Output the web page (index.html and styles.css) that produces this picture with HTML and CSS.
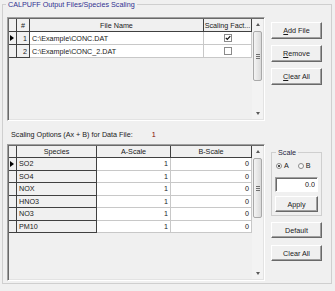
FILE: index.html
```html
<!DOCTYPE html>
<html lang="en">
<head>
  <meta charset="UTF-8" />
  <title>CALPUFF Output Files/Species Scaling</title>
  <link rel="stylesheet" href="styles.css">
</head>
<body>
  <fieldset class="group">
    <legend>CALPUFF Output Files/Species Scaling</legend>

    <div class="row">
      <div class="grid grid-files">
        <div class="cells">
          <div class="gr head">
            <div class="c fx"></div>
            <div class="c fx">#</div>
            <div class="c fx">File Name</div>
            <div class="c fx">Scaling Fact...</div>
          </div>
          <div class="gr">
            <div class="c fx ind"><span class="arrow"></span></div>
            <div class="c fx num">1</div>
            <div class="c">C:\Example\CONC.DAT</div>
            <div class="c chk">
              <svg width="8" height="8" viewBox="0 0 8 8"><rect x="0.5" y="0.5" width="7" height="7" fill="#fff" stroke="#8a8a8a"/><path d="M1.8 3.8 L3.3 5.4 L6.3 2.2" stroke="#111" stroke-width="1.2" fill="none"/></svg>
            </div>
          </div>
          <div class="gr">
            <div class="c fx ind"></div>
            <div class="c fx num">2</div>
            <div class="c">C:\Example\CONC_2.DAT</div>
            <div class="c chk">
              <svg width="8" height="8" viewBox="0 0 8 8"><rect x="0.5" y="0.5" width="7" height="7" fill="#fff" stroke="#8a8a8a"/></svg>
            </div>
          </div>
        </div>
        <div class="vscroll">
          <div class="sb-arrow up"></div>
          <div class="thumb thumb-files"><span class="grip"></span></div>
          <div class="track"></div>
          <div class="sb-arrow down"></div>
        </div>
      </div>

      <div class="buttons">
        <button class="btn"><u>A</u>dd File</button>
        <button class="btn"><u>R</u>emove</button>
        <button class="btn"><u>C</u>lear All</button>
      </div>
    </div>

    <div class="info">Scaling Options (Ax + B) for Data File: <span class="file-no">1</span></div>

    <div class="row">
      <div class="grid grid-species">
        <div class="cells">
          <div class="gr head">
            <div class="c fx"></div>
            <div class="c fx">Species</div>
            <div class="c fx">A-Scale</div>
            <div class="c fx">B-Scale</div>
          </div>
          <div class="gr">
            <div class="c fx ind"><span class="arrow"></span></div>
            <div class="c fx">SO2</div>
            <div class="c num">1</div>
            <div class="c num">0</div>
          </div>
          <div class="gr">
            <div class="c fx ind"></div>
            <div class="c fx">SO4</div>
            <div class="c num">1</div>
            <div class="c num">0</div>
          </div>
          <div class="gr">
            <div class="c fx ind"></div>
            <div class="c fx">NOX</div>
            <div class="c num">1</div>
            <div class="c num">0</div>
          </div>
          <div class="gr">
            <div class="c fx ind"></div>
            <div class="c fx">HNO3</div>
            <div class="c num">1</div>
            <div class="c num">0</div>
          </div>
          <div class="gr">
            <div class="c fx ind"></div>
            <div class="c fx">NO3</div>
            <div class="c num">1</div>
            <div class="c num">0</div>
          </div>
          <div class="gr">
            <div class="c fx ind"></div>
            <div class="c fx">PM10</div>
            <div class="c num">1</div>
            <div class="c num">0</div>
          </div>
        </div>
        <div class="vscroll">
          <div class="sb-arrow up"></div>
          <div class="thumb thumb-species"><span class="grip"></span></div>
          <div class="track"></div>
          <div class="sb-arrow down"></div>
        </div>
      </div>

      <div class="side">
        <fieldset class="scale">
          <legend>Scale</legend>
          <div class="radios">
            <span class="opt"><span class="radio on"></span>A</span>
            <span class="opt"><span class="radio"></span>B</span>
          </div>
          <input class="scale-val" type="text" value="0.0">
          <button class="btn btn-apply">Apply</button>
        </fieldset>
        <button class="btn btn-default">Default</button>
        <button class="btn btn-clear">Clear All</button>
      </div>
    </div>
  </fieldset>
</body>
</html>
```

FILE: styles.css
```css
html, body {
  margin: 0;
  padding: 0;
}

body {
  width: 335px;
  height: 291px;
  overflow: hidden;
  background: #f0f0f0;
  font-family: 'Liberation Sans', Arial, sans-serif;
  font-size: 7.2px;
  color: #1a1a1a;
}

/* outer group box */
.group {
  box-sizing: border-box;
  width: 330px;
  height: 284px;
  margin: 0 0 0 2px;
  padding: 8px 8px 1px 4px;
  border: 1px solid #cfcfcf;
  min-width: 0;
}

.group > legend {
  padding: 0 2px;
  margin-left: -1px;
  line-height: 9px;
  color: #303090;
}

.row {
  display: flex;
  gap: 6px;
}

/* string grids */
.grid {
  display: flex;
  box-sizing: border-box;
  width: 258px;
  padding: 1px;
  border: 1px solid;
  border-color: #a0a0a0 #fff #fff #a0a0a0;
  box-shadow: inset 1px 1px #696969, inset -1px -1px #e3e3e3;
}

.grid-files { height: 104px; }
.grid-species { height: 137px; }

.cells {
  flex: 1;
  background: #f0f0f0;
  overflow: hidden;
}

.gr {
  display: grid;
}

.grid-files .gr {
  grid-template-columns: 8px 13px 174px 1fr;
  height: 13px;
}

.grid-species .gr {
  grid-template-columns: 8px 80px 74px 1fr;
  height: 12.5px;
}

.grid-species .gr.head {
  height: 12px;
}

.c {
  display: flex;
  align-items: center;
  box-sizing: border-box;
  padding: 0 2px;
  background: #fff;
  border-right: 1px solid #c8c8c8;
  border-bottom: 1px solid #c8c8c8;
  white-space: nowrap;
  overflow: hidden;
}

.c.fx {
  background: #f0f0f0;
  border-color: #404040;
}

.head .c {
  justify-content: center;
}

.c.num {
  justify-content: flex-end;
}

.c.ind {
  padding: 0 0 0 1px;
}

.c.chk {
  justify-content: center;
}

.arrow {
  width: 0;
  height: 0;
  border-left: 4px solid #000;
  border-top: 3.5px solid transparent;
  border-bottom: 3.5px solid transparent;
}

/* vertical scrollbar */
.vscroll {
  width: 11px;
  display: flex;
  flex-direction: column;
  background: #f3f3f3;
}

.sb-arrow {
  height: 11px;
  display: flex;
  align-items: center;
  justify-content: center;
}

.sb-arrow::before {
  content: "";
  border-left: 2.5px solid transparent;
  border-right: 2.5px solid transparent;
}

.sb-arrow.up::before { border-bottom: 3px solid #5a5a5a; }
.sb-arrow.down::before { border-top: 3px solid #5a5a5a; }

.thumb {
  margin: 1px 1px 0;
  box-sizing: border-box;
  border: 1px solid #a9a9a9;
  border-radius: 2px;
  background: linear-gradient(to right, #f4f4f4, #dadada);
  display: flex;
  align-items: center;
  justify-content: center;
}

.thumb-files { height: 50px; }
.thumb-species { height: 60px; }

.grip {
  width: 4px;
  height: 5px;
  background: repeating-linear-gradient(#707070 0 1px, transparent 1px 2px);
}

.track {
  flex: 1;
}

/* buttons */
.btn {
  display: block;
  box-sizing: border-box;
  width: 51px;
  height: 17px;
  padding: 0;
  font: inherit;
  color: #1a1a1a;
  text-align: center;
  background: #f0f0f0;
  border: 1px solid;
  border-color: #fff #696969 #696969 #fff;
  box-shadow: inset -1px -1px #a0a0a0;
}

.buttons {
  display: flex;
  flex-direction: column;
  gap: 6px;
  padding-top: 5px;
}

.info {
  height: 9px;
  line-height: 9px;
  margin: 9px 0 5px 4px;
}

.file-no {
  color: #800000;
  margin-left: 17px;
}

/* scale side panel */
.side {
  width: 51px;
  display: flex;
  flex-direction: column;
}

.scale {
  box-sizing: border-box;
  height: 68px;
  margin: 4px 0 0;
  padding: 0 3px 3px;
  border: 1px solid #cfcfcf;
  min-width: 0;
}

.scale > legend {
  padding: 0 2px;
  margin-left: 1px;
  line-height: 9px;
  color: #1e1e3c;
}

.radios {
  display: flex;
  gap: 9px;
  height: 9px;
  margin-top: 4px;
  padding-left: 1px;
  align-items: center;
}

.opt {
  display: flex;
  align-items: center;
  gap: 2px;
}

.radio {
  box-sizing: border-box;
  width: 6px;
  height: 6px;
  border: 1px solid #8a8a8a;
  border-radius: 50%;
  background: #fafafa;
  display: flex;
  align-items: center;
  justify-content: center;
}

.radio.on::before {
  content: "";
  width: 2px;
  height: 2px;
  border-radius: 50%;
  background: #111;
}

.scale-val {
  display: block;
  box-sizing: border-box;
  width: 43px;
  height: 15px;
  margin-top: 7px;
  padding: 0 2px;
  font: inherit;
  color: #1a1a1a;
  text-align: right;
  background: #fff;
  border: 1px solid;
  border-color: #a0a0a0 #fff #fff #a0a0a0;
  box-shadow: inset 1px 1px #696969;
  outline: none;
}

.btn-apply {
  width: 43px;
  height: 16px;
  margin-top: 4px;
}

.btn-default {
  height: 16px;
  margin-top: 6px;
}

.btn-clear {
  height: 16px;
  margin-top: 7px;
}
```
